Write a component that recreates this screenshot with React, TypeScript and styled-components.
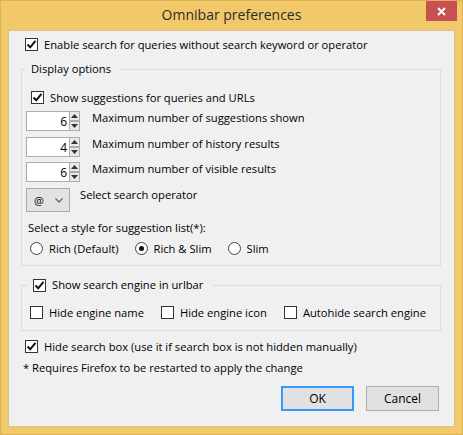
import React, { FC } from 'react'
import styled, { createGlobalStyle } from 'styled-components'

const GlobalStyle = createGlobalStyle`
  html, body {
    margin: 0;
    padding: 0;
    background: #f1c96b;
  }

  body {
    font-family: 'Open Sans', 'Noto Sans', sans-serif;
    font-size: 11.2px;
    color: #000;
  }
`

const Window = styled.div`
  width: 463px;
  height: 435px;
  box-sizing: border-box;
  background: #f1c96b;
  border: 1px solid #dcb255;
  display: flex;
  flex-direction: column;
`

const TitleBar = styled.div`
  height: 29px;
  display: grid;
  grid-template-columns: 1fr auto 1fr;
  align-items: start;
`

const Title = styled.div`
  grid-column: 2;
  font-size: 14px;
  line-height: 28px;
  color: #2b2b2b;
`

const CloseButton = styled.div`
  grid-column: 3;
  justify-self: end;
  margin-right: 5px;
  width: 31px;
  height: 20px;
  background: #c75050;
  display: flex;
  align-items: center;
  justify-content: center;
`

const Client = styled.div`
  flex: 1;
  margin: 0 7px 7px 7px;
  background: #f0f0f0;
  border: 1px solid #dcc18a;
  display: flex;
  flex-direction: column;
  padding: 5px 13px 0 12px;
`

const Row = styled.div<{ indent?: number; top?: number }>`
  display: flex;
  align-items: center;
  height: 16px;
  margin-left: ${(p) => p.indent ?? 0}px;
  margin-top: ${(p) => p.top ?? 0}px;
`

const OptionLabel = styled.label<{ space?: number }>`
  display: flex;
  align-items: center;
  gap: 6px;
  white-space: nowrap;
  margin-right: ${(p) => p.space ?? 0}px;
`

const Box = styled.span`
  width: 13px;
  height: 13px;
  box-sizing: border-box;
  border: 1px solid #333;
  background: #fff;
  display: flex;
  align-items: center;
  justify-content: center;
  flex-shrink: 0;
`

const RadioCircle = styled(Box)`
  border-radius: 50%;
  border-color: #444;
`

const Dot = styled.span`
  width: 5px;
  height: 5px;
  border-radius: 50%;
  background: #111;
`

const Group = styled.fieldset<{ top: number }>`
  margin: ${(p) => p.top}px 0 0 0;
  padding: 0;
  border: 1px solid #dcdcdc;
  min-inline-size: 0;
`

const Legend = styled.legend<{ offset: number }>`
  margin-left: ${(p) => p.offset}px;
  padding: 0 10px 0 6px;
  line-height: 16px;
  height: 16px;
`

const GroupBody = styled.div<{ pt: number; pb: number }>`
  display: flex;
  flex-direction: column;
  padding: ${(p) => p.pt}px 4px ${(p) => p.pb}px 4px;
`

const SpinRow = styled.div<{ top: number }>`
  display: flex;
  align-items: flex-start;
  margin-top: ${(p) => p.top}px;
`

const SpinInput = styled.div`
  width: 43px;
  height: 20px;
  box-sizing: border-box;
  background: #fff;
  border: 1px solid #abadb3;
  border-right: none;
  display: flex;
  align-items: center;
  justify-content: flex-end;
  padding-right: 2px;
  font-size: 12px;
`

const SpinButtons = styled.div`
  width: 11px;
  height: 20px;
  display: flex;
  flex-direction: column;
`

const SpinButton = styled.div`
  flex: 1;
  box-sizing: border-box;
  background: #e8e8e8;
  border: 1px solid #acacac;
  display: flex;
  align-items: center;
  justify-content: center;
`

const SideLabel = styled.span<{ gap: number }>`
  margin-left: ${(p) => p.gap}px;
  line-height: 16px;
  margin-top: -1px;
  white-space: nowrap;
`

const Select = styled.div`
  width: 44px;
  height: 24px;
  box-sizing: border-box;
  background: #e3e3e3;
  border: 1px solid #acacac;
  display: flex;
  align-items: center;
  justify-content: space-between;
  padding: 0 6px 0 7px;
  font-size: 11px;
`

const ButtonBar = styled.div`
  display: flex;
  justify-content: flex-end;
  gap: 12px;
  margin-top: 10px;
  margin-right: 2px;
`

const Button = styled.div<{ primary?: boolean }>`
  width: 73px;
  height: 25px;
  box-sizing: border-box;
  background: #e1e1e1;
  border: 1px solid ${(p) => (p.primary ? '#3399ff' : '#adadad')};
  box-shadow: ${(p) => (p.primary ? 'inset 0 0 0 1px #3399ff' : 'none')};
  display: flex;
  align-items: center;
  justify-content: center;
  font-size: 12px;
`

const Note = styled.div`
  line-height: 16px;
  margin-top: 6px;
  margin-left: 2px;
`

const Check: FC<{ checked?: boolean }> = ({ checked }) => (
  <Box>
    {checked && (
      <svg width="11" height="11" viewBox="0 0 11 11">
        <path d="M1.5 5.5 L4.2 8.3 L9.5 1.8" fill="none" stroke="#111" strokeWidth="2" />
      </svg>
    )}
  </Box>
)

const Radio: FC<{ checked?: boolean }> = ({ checked }) => (
  <RadioCircle>{checked && <Dot />}</RadioCircle>
)

const Arrow: FC<{ up?: boolean }> = ({ up }) => (
  <svg width="7" height="4" viewBox="0 0 7 4">
    <path d={up ? 'M0 4 L3.5 0 L7 4 Z' : 'M0 0 L3.5 4 L7 0 Z'} fill="#333" />
  </svg>
)

const Spinner: FC<{ value: number; label: string; top: number }> = ({ value, label, top }) => (
  <SpinRow top={top}>
    <SpinInput>{value}</SpinInput>
    <SpinButtons>
      <SpinButton>
        <Arrow up />
      </SpinButton>
      <SpinButton>
        <Arrow />
      </SpinButton>
    </SpinButtons>
    <SideLabel gap={12}>{label}</SideLabel>
  </SpinRow>
)

export default function App() {
  return (
    <>
      <GlobalStyle />
      <Window>
        <TitleBar>
          <Title>Omnibar preferences</Title>
          <CloseButton>
            <svg width="9" height="9" viewBox="0 0 9 9">
              <path d="M1 1 L8 8 M8 1 L1 8" stroke="#fff" strokeWidth="2" />
            </svg>
          </CloseButton>
        </TitleBar>

        <Client>
          <Row indent={4}>
            <OptionLabel>
              <Check checked />
              Enable search for queries without search keyword or operator
            </OptionLabel>
          </Row>

          <Group top={9}>
            <Legend offset={3}>Display options</Legend>
            <GroupBody pt={12} pb={9}>
              <Row indent={5}>
                <OptionLabel>
                  <Check checked />
                  Show suggestions for queries and URLs
                </OptionLabel>
              </Row>
              <Spinner top={6} value={6} label="Maximum number of suggestions shown" />
              <Spinner top={6} value={4} label="Maximum number of history results" />
              <Spinner top={5} value={6} label="Maximum number of visible results" />
              <SpinRow top={6}>
                <Select>
                  <span>@</span>
                  <svg width="8" height="5" viewBox="0 0 8 5">
                    <path d="M0.5 0.5 L4 4 L7.5 0.5" fill="none" stroke="#666" strokeWidth="1.3" />
                  </svg>
                </Select>
                <SideLabel gap={10}>Select search operator</SideLabel>
              </SpinRow>
              <Row indent={2} top={7}>
                Select a style for suggestion list(*):
              </Row>
              <Row indent={4} top={5}>
                <OptionLabel space={16}>
                  <Radio />
                  Rich (Default)
                </OptionLabel>
                <OptionLabel space={16}>
                  <Radio checked />
                  Rich &amp; Slim
                </OptionLabel>
                <OptionLabel>
                  <Radio />
                  Slim
                </OptionLabel>
              </Row>
            </GroupBody>
          </Group>

          <Group top={11}>
            <Legend offset={5}>
              <OptionLabel>
                <Check checked />
                Show search engine in urlbar
              </OptionLabel>
            </Legend>
            <GroupBody pt={11} pb={10}>
              <Row indent={4}>
                <OptionLabel space={17}>
                  <Check />
                  Hide engine name
                </OptionLabel>
                <OptionLabel space={17}>
                  <Check />
                  Hide engine icon
                </OptionLabel>
                <OptionLabel>
                  <Check />
                  Autohide search engine
                </OptionLabel>
              </Row>
            </GroupBody>
          </Group>

          <Row indent={4} top={7}>
            <OptionLabel>
              <Check checked />
              Hide search box (use it if search box is not hidden manually)
            </OptionLabel>
          </Row>
          <Note>* Requires Firefox to be restarted to apply the change</Note>

          <ButtonBar>
            <Button primary>OK</Button>
            <Button>Cancel</Button>
          </ButtonBar>
        </Client>
      </Window>
    </>
  )
}
